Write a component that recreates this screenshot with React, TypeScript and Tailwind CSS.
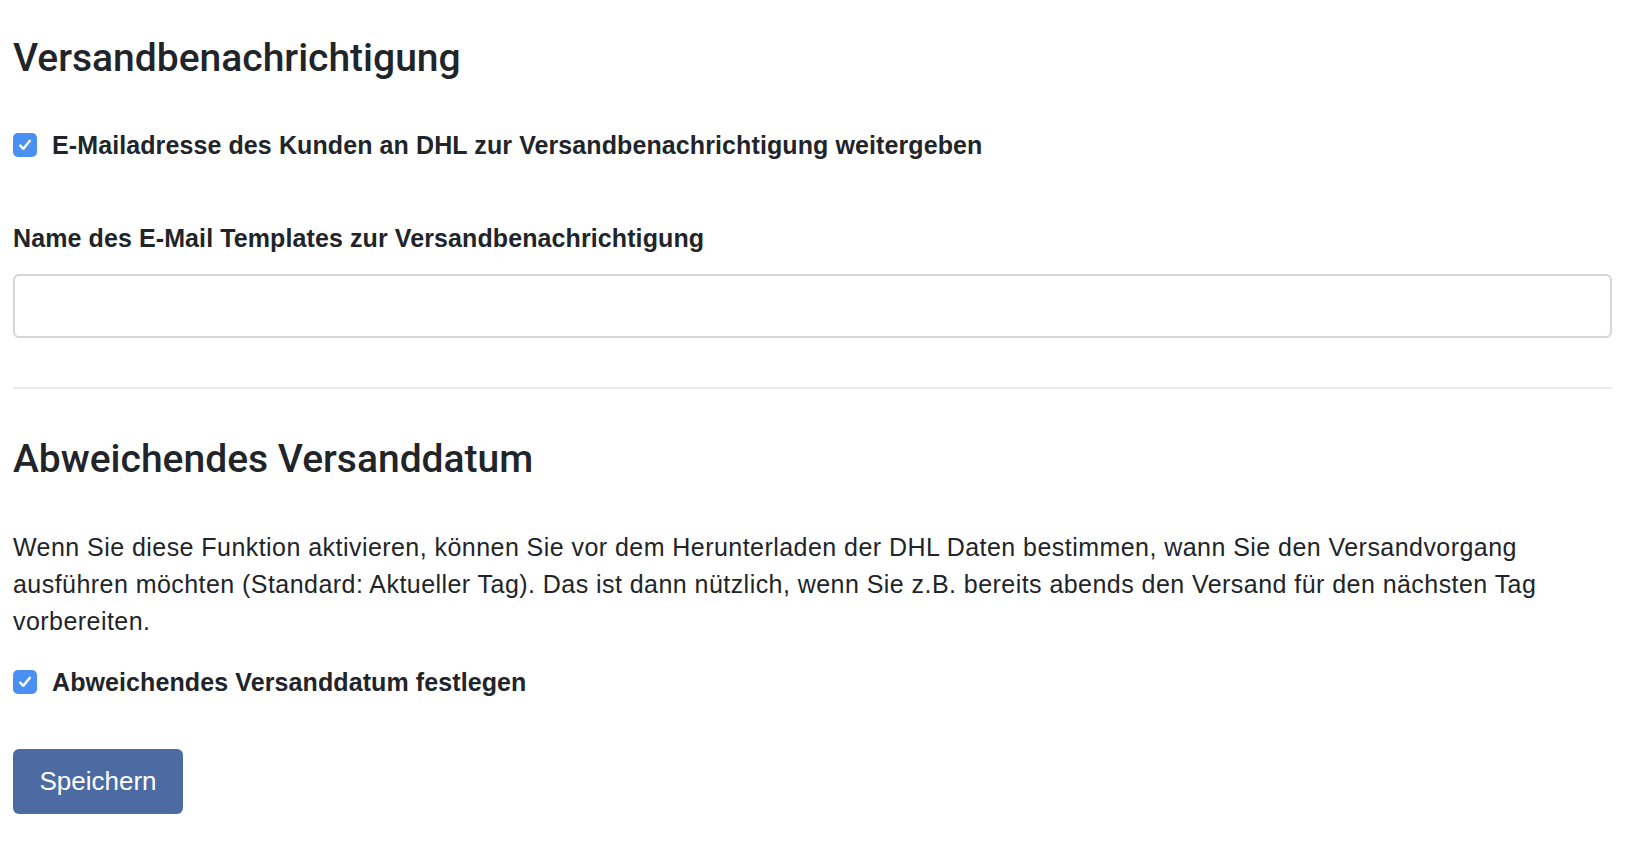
import React, { useState } from "react";

function CheckRow({ label, checked, onChange }: { label: string; checked: boolean; onChange: (v: boolean) => void }) {
  return (
    <label className="flex items-center gap-[15px] cursor-pointer select-none">
      <span
        onClick={() => onChange(!checked)}
        className={`flex items-center justify-center w-[24px] h-[24px] rounded-[5px] shrink-0 ${
          checked ? "bg-[#4a90f2]" : "bg-white border border-[#b5b5b5]"
        }`}
      >
        {checked && (
          <svg width="16" height="16" viewBox="0 0 16 16" fill="none">
            <path d="M3.2 8.6 L6.4 11.8 L12.8 3.8" stroke="white" strokeWidth="2.4" strokeLinecap="round" strokeLinejoin="round" />
          </svg>
        )}
      </span>
      <span className="text-[25px] leading-[36px] font-bold tracking-[0.1px] text-[#212529]">{label}</span>
    </label>
  );
}

export default function App() {
  const [notify, setNotify] = useState(true);
  const [customDate, setCustomDate] = useState(true);
  const [template, setTemplate] = useState("");

  return (
    <div className="min-h-screen bg-white pl-[13px] pr-[36px] pt-[34px] font-['Liberation_Sans',Arial,sans-serif] text-[#212529]">
      <h2 className="text-[39px] leading-[48px] font-medium font-['Roboto','Liberation_Sans',sans-serif]">
        Versandbenachrichtigung
      </h2>

      <div className="mt-[45px]">
        <CheckRow
          label="E-Mailadresse des Kunden an DHL zur Versandbenachrichtigung weitergeben"
          checked={notify}
          onChange={setNotify}
        />
      </div>

      <div className="mt-[57px] text-[25px] leading-[36px] font-bold tracking-[0.1px]">
        Name des E-Mail Templates zur Versandbenachrichtigung
      </div>
      <input
        type="text"
        value={template}
        onChange={e => setTemplate(e.target.value)}
        className="mt-[18px] block w-full h-[64px] rounded-[6px] border-2 border-[#d3d6da] px-4 text-[24px] outline-none"
      />

      <hr className="mt-[49px] border-0 border-t-2 border-[#ebebeb]" />

      <h2 className="mt-[46px] text-[39px] leading-[48px] font-medium font-['Roboto','Liberation_Sans',sans-serif]">
        Abweichendes Versanddatum
      </h2>

      <p className="mt-[46px] text-[25px] leading-[37px] tracking-[0.45px]">
        Wenn Sie diese Funktion aktivieren, können Sie vor dem Herunterladen der DHL Daten bestimmen, wann Sie den
        Versandvorgang ausführen möchten (Standard: Aktueller Tag). Das ist dann nützlich, wenn Sie z.B. bereits abends
        den Versand für den nächsten Tag vorbereiten.
      </p>

      <div className="mt-[24px]">
        <CheckRow label="Abweichendes Versanddatum festlegen" checked={customDate} onChange={setCustomDate} />
      </div>

      <button className="mt-[49px] h-[65px] w-[170px] rounded-[6px] bg-[#4d6ba3] text-white text-[26px]">
        Speichern
      </button>
    </div>
  );
}
